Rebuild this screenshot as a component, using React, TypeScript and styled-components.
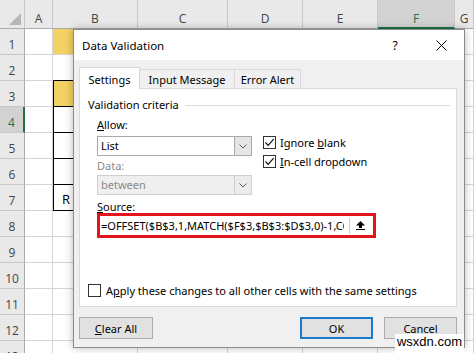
import styled, { createGlobalStyle } from "styled-components";
import { FC, ReactNode } from "react";

const GlobalStyle = createGlobalStyle`
  html, body {
    margin: 0;
    padding: 0;
    background: #fff;
  }
  body {
    width: 474px;
    height: 353px;
    overflow: hidden;
  }
  * {
    box-sizing: border-box;
  }
`;

const Page = styled.div`
  position: relative;
  width: 474px;
  height: 353px;
  overflow: hidden;
`;

/* ---------- spreadsheet behind the dialog ---------- */

const Sheet = styled.div`
  display: grid;
  grid-template-columns: 25px 28px 85px 90px 75px 75px 77px 19px;
  grid-template-rows: 29px repeat(13, 26px);
  font-family: "Open Sans", "Noto Sans", sans-serif;
  color: #444;
`;

const Corner = styled.div`
  position: relative;
  background: #e9e9e9;
  border-right: 1px solid #c8c8c8;
  border-bottom: 1px solid #ababab;

  &::after {
    content: "";
    position: absolute;
    right: 3px;
    bottom: 3px;
    border-style: solid;
    border-width: 0 0 12px 12px;
    border-color: transparent transparent #b7b7b7 transparent;
  }
`;

const HeaderCell = styled.div<{ $selected?: boolean }>`
  display: flex;
  align-items: center;
  justify-content: center;
  font-size: 12px;
  background: ${(p) => (p.$selected ? "#d2d2d2" : "#e9e9e9")};
  color: ${(p) => (p.$selected ? "#217346" : "#444")};
`;

const ColHeader = styled(HeaderCell)`
  padding-top: 9px;
  border-right: 1px solid #c8c8c8;
  border-bottom: ${(p) => (p.$selected ? "2px solid #217346" : "1px solid #ababab")};
`;

const RowHeader = styled(HeaderCell)`
  padding-top: 5px;
  border-bottom: 1px solid #c8c8c8;
  border-right: ${(p) => (p.$selected ? "2px solid #217346" : "1px solid #ababab")};
`;

const Cell = styled.div<{ $fill?: string; $boxed?: boolean; $ruleBelow?: boolean }>`
  display: flex;
  align-items: center;
  padding: 3px 0 0 9px;
  font-size: 13px;
  color: #000;
  background: ${(p) => p.$fill ?? "#fff"};
  border-right: 1px solid ${(p) => (p.$boxed ? "#000" : "#d4d4d4")};
  border-bottom: 1px solid ${(p) => (p.$boxed || p.$ruleBelow ? "#000" : "#d4d4d4")};
  box-shadow: ${(p) => (p.$boxed ? "inset 1px 0 0 #000" : "none")};
`;

type CellSpec = { fill?: string; boxed?: boolean; ruleBelow?: boolean; text?: string };

const YELLOW = "#f4d163";
const columns = ["A", "B", "C", "D", "E", "F", "G"];
const rows = Array.from({ length: 13 }, (_, i) => i + 1);
const selectedColumn = "F";
const selectedRow = 4;

const cells: Record<string, CellSpec> = {
  B1: { fill: YELLOW },
  B2: { ruleBelow: true },
  B3: { fill: YELLOW, boxed: true },
  B4: { boxed: true },
  B5: { boxed: true },
  B6: { boxed: true },
  B7: { boxed: true, text: "R" },
};

/* ---------- the dialog ---------- */

const Dialog = styled.div`
  position: absolute;
  left: 73px;
  top: 29px;
  width: 392px;
  height: 319px;
  display: flex;
  flex-direction: column;
  background: #f0f0f0;
  border: 1px solid #8b8b8b;
  box-shadow: 0 0 8px rgba(0, 0, 0, 0.28);
  font-family: "Segoe UI", "Noto Sans", sans-serif;
  font-size: 11px;
  color: #000;
`;

const TitleBar = styled.div`
  flex: 0 0 30px;
  display: flex;
  align-items: center;
  background: #fff;
`;

const Title = styled.div`
  flex: 1;
  padding-left: 8px;
  font-size: 11.5px;
`;

const TitleButton = styled.div`
  width: 46px;
  height: 30px;
  display: flex;
  align-items: center;
  justify-content: center;
  font-size: 12px;
`;

const Body = styled.div`
  flex: 1;
  display: flex;
  flex-direction: column;
  padding: 7px 7px 8px 5px;
`;

const TabStrip = styled.div`
  position: relative;
  z-index: 1;
  display: flex;
  align-items: flex-end;
  height: 21px;
`;

const Tab = styled.div<{ $active?: boolean; $width: number }>`
  width: ${(p) => p.$width}px;
  height: ${(p) => (p.$active ? 22 : 19)}px;
  margin-bottom: ${(p) => (p.$active ? -1 : 0)}px;
  display: flex;
  align-items: center;
  justify-content: center;
  padding-top: ${(p) => (p.$active ? 1 : 0)}px;
  background: ${(p) => (p.$active ? "#fff" : "#f0f0f0")};
  border: 1px solid #d9d9d9;
  border-bottom: none;
  & + & {
    margin-left: -1px;
  }
`;

const Panel = styled.div`
  flex: 0 0 219px;
  display: flex;
  flex-direction: column;
  background: #fff;
  border: 1px solid #d9d9d9;
  padding: 8px 6px 9px 8px;
`;

const Legend = styled.div`
  display: flex;
  align-items: center;
  gap: 6px;
  height: 16px;
  line-height: 16px;

  &::after {
    content: "";
    flex: 1;
    height: 1px;
    background: #dcdcdc;
  }
`;

const Criteria = styled.div`
  padding-left: 9px;
  margin-top: 4px;
`;

const CriteriaRow = styled.div`
  display: flex;
  gap: 11px;
`;

const LeftColumn = styled.div`
  width: 155px;
  display: flex;
  flex-direction: column;
`;

const RightColumn = styled.div`
  display: flex;
  flex-direction: column;
  padding-top: 16px;
`;

const FieldLabel = styled.div<{ $disabled?: boolean; $gap?: number }>`
  height: 16px;
  line-height: 16px;
  margin-top: ${(p) => p.$gap ?? 0}px;
  color: ${(p) => (p.$disabled ? "#8a8a8a" : "#000")};
`;

const Combo = styled.div<{ $disabled?: boolean; $gap: number }>`
  display: flex;
  height: 20px;
  margin-top: ${(p) => p.$gap}px;
  border: 1px solid ${(p) => (p.$disabled ? "#cfcfcf" : "#a9a9a9")};
  background: ${(p) => (p.$disabled ? "#efefef" : "#fff")};
  color: ${(p) => (p.$disabled ? "#8a8a8a" : "#000")};
`;

const ComboText = styled.div`
  flex: 1;
  padding-left: 3px;
  line-height: 18px;
`;

const ComboArrow = styled.div<{ $disabled?: boolean }>`
  width: 17px;
  display: flex;
  align-items: center;
  justify-content: center;
  background: ${(p) => (p.$disabled ? "#ececec" : "#e5e5e5")};
  border-left: 1px solid ${(p) => (p.$disabled ? "#cfcfcf" : "#a9a9a9")};
`;

const CheckRow = styled.div`
  display: flex;
  align-items: center;
  gap: 4px;
  height: 19px;
`;

const Box = styled.div`
  width: 13px;
  height: 13px;
  flex: 0 0 13px;
  border: 1px solid #333;
  background: #fff;
  display: flex;
  align-items: center;
  justify-content: center;
`;

const SourceInput = styled.div`
  display: flex;
  align-items: center;
  width: 273px;
  height: 19px;
  margin: 1px 0 0 3px;
  background: #fff;
  outline: 3px solid #e3141c;
`;

const SourceText = styled.div`
  width: 244px;
  padding-left: 1px;
  overflow: hidden;
  white-space: nowrap;
  line-height: 19px;
`;

const RefButton = styled.div`
  margin-left: auto;
  margin-right: 3px;
  width: 21px;
  height: 16px;
  display: flex;
  align-items: center;
  justify-content: center;
  background: #fff;
  border-left: 1px solid #cdcdcd;
`;

const ApplyRow = styled.div`
  margin-top: auto;
  display: flex;
  align-items: center;
  gap: 5px;
  height: 13px;
`;

const ButtonRow = styled.div`
  display: flex;
  margin-top: 10px;
  height: 22px;
`;

const RightButtons = styled.div`
  display: flex;
  gap: 11px;
  margin-left: auto;
`;

const Button = styled.div<{ $width: number; $primary?: boolean }>`
  width: ${(p) => p.$width}px;
  display: flex;
  align-items: center;
  justify-content: center;
  background: #e1e1e1;
  border: ${(p) => (p.$primary ? "2px solid #1a78cf" : "1px solid #adadad")};
`;

const Watermark = styled.div`
  position: absolute;
  right: 10px;
  bottom: 0;
  height: 19px;
  padding: 0 2px 3px;
  background: #fff;
  font-family: "Liberation Sans", Arial, sans-serif;
  font-size: 13px;
  line-height: 16px;
  color: #000;
`;

/* ---------- small drawings ---------- */

const Chevron: FC = () => (
  <svg width="8" height="5" viewBox="0 0 8 5">
    <path d="M0.5 0.5 L4 4 L7.5 0.5" stroke="#606060" fill="none" strokeWidth="1" />
  </svg>
);

const Tick: FC = () => (
  <svg width="11" height="11" viewBox="0 0 11 11">
    <path d="M1.5 5.5 L4.2 8.3 L9.6 2.2" stroke="#111" fill="none" strokeWidth="1.2" />
  </svg>
);

const CloseIcon: FC = () => (
  <svg width="11" height="11" viewBox="0 0 11 11">
    <path d="M0.5 0.5 L10.5 10.5 M10.5 0.5 L0.5 10.5" stroke="#000" strokeWidth="1" />
  </svg>
);

const CollapseIcon: FC = () => (
  <svg width="9" height="9" viewBox="0 0 9 9">
    <path d="M4.5 0 L9 4.5 H6 V7 H3 V4.5 H0 Z" fill="#000" />
    <rect x="0" y="8" width="9" height="1" fill="#000" />
  </svg>
);

const CheckBox: FC<{ checked?: boolean; children: ReactNode }> = ({ checked, children }) => (
  <CheckRow>
    <Box>{checked && <Tick />}</Box>
    <span>{children}</span>
  </CheckRow>
);

/* ---------- page ---------- */

export default function App() {
  return (
    <Page>
      <GlobalStyle />
      <Sheet>
        <Corner />
        {columns.map((c) => (
          <ColHeader key={c} $selected={c === selectedColumn}>
            {c}
          </ColHeader>
        ))}
        {rows.map((r) => [
          <RowHeader key={`h${r}`} $selected={r === selectedRow}>
            {r}
          </RowHeader>,
          ...columns.map((c) => {
            const spec = cells[`${c}${r}`] ?? {};
            return (
              <Cell key={`${c}${r}`} $fill={spec.fill} $boxed={spec.boxed} $ruleBelow={spec.ruleBelow}>
                {spec.text}
              </Cell>
            );
          }),
        ])}
      </Sheet>

      <Dialog>
        <TitleBar>
          <Title>Data Validation</Title>
          <TitleButton>?</TitleButton>
          <TitleButton>
            <CloseIcon />
          </TitleButton>
        </TitleBar>

        <Body>
          <TabStrip>
            <Tab $active $width={61}>Settings</Tab>
            <Tab $width={96}>Input Message</Tab>
            <Tab $width={67}>Error Alert</Tab>
          </TabStrip>

          <Panel>
            <Legend>Validation criteria</Legend>
            <Criteria>
              <CriteriaRow>
                <LeftColumn>
                  <FieldLabel>
                    <u>A</u>llow:
                  </FieldLabel>
                  <Combo $gap={3}>
                    <ComboText>List</ComboText>
                    <ComboArrow>
                      <Chevron />
                    </ComboArrow>
                  </Combo>
                  <FieldLabel $disabled $gap={2}>
                    Data:
                  </FieldLabel>
                  <Combo $disabled $gap={1}>
                    <ComboText>between</ComboText>
                    <ComboArrow $disabled>
                      <Chevron />
                    </ComboArrow>
                  </Combo>
                </LeftColumn>
                <RightColumn>
                  <CheckBox checked>
                    Ignore <u>b</u>lank
                  </CheckBox>
                  <CheckBox checked>
                    <u>I</u>n-cell dropdown
                  </CheckBox>
                </RightColumn>
              </CriteriaRow>
              <FieldLabel $gap={4}>
                <u>S</u>ource:
              </FieldLabel>
              <SourceInput>
                <SourceText>=OFFSET($B$3,1,MATCH($F$3,$B$3:$D$3,0)-1,COUNTA(OFFSET($B$3,1,MATCH($F$3,$B$3:$D$3,0)-1,10,1)),1)</SourceText>
                <RefButton>
                  <CollapseIcon />
                </RefButton>
              </SourceInput>
            </Criteria>
            <ApplyRow>
              <Box />
              <span>
                A<u>p</u>ply these changes to all other cells with the same settings
              </span>
            </ApplyRow>
          </Panel>

          <ButtonRow>
            <Button $width={74}>
              <span>
                <u>C</u>lear All
              </span>
            </Button>
            <RightButtons>
              <Button $width={73} $primary>
                OK
              </Button>
              <Button $width={73}>Cancel</Button>
            </RightButtons>
          </ButtonRow>
        </Body>
      </Dialog>

      <Watermark>wsxdn.com</Watermark>
    </Page>
  );
}
